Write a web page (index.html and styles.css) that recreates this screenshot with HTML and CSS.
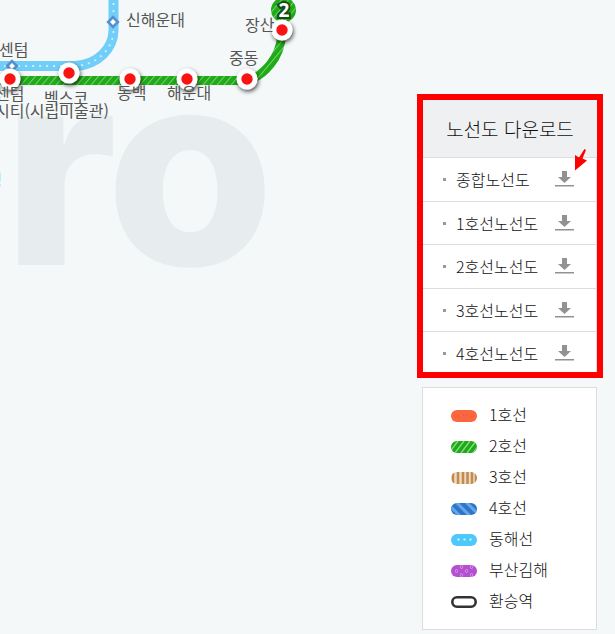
FILE: index.html
```html
<!DOCTYPE html>
<html lang="ko">
<head>
<meta charset="utf-8">
<meta name="viewport" content="width=device-width, initial-scale=1">
<title>노선도</title>
<link rel="stylesheet" href="styles.css">
</head>
<body>
<main class="page">
  <svg class="map" aria-label="노선도">
    <defs>
      <pattern id="hatch" width="7" height="9" patternUnits="userSpaceOnUse" patternTransform="translate(0 76) skewX(-40)">
        <rect width="7" height="9" fill="#1fab18"/>
        <rect width="1.2" height="9" fill="#7fd27a"/>
      </pattern>
      <filter id="shadow" x="-50%" y="-50%" width="200%" height="200%">
        <feDropShadow dx="1" dy="2" stdDeviation="2" flood-color="#000" flood-opacity="0.7"/>
      </filter>
      <g id="station">
        <circle r="10.5" fill="#fff" filter="url(#shadow)"/>
        <circle r="5.7" fill="#f91414"/>
      </g>
      <path id="diamond" d="M0-4.8 4.8 0 0 4.8-4.8 0Z" fill="#fff" stroke="#5590cc" stroke-width="2.6"/>
    </defs>
    <text class="watermark" x="3 106" y="265">ro</text>
    <path class="line donghae" d="M113.5 0V30C113.500 48 98 65 75 66H0"/>
    <path class="dots" d="M113.5 3V30C113.500 48 98 65 75 66H0"/>
    <path class="line line2" d="M0 80.5H247C265 75 280 58 282 34"/>
    <use href="#diamond" x="113" y="22"/>
    <use href="#diamond" x="12" y="66"/>
    <circle cx="283.500" cy="10" r="12.500" fill="url(#hatch)"/>
    <text class="badge" x="284" y="17">2</text>
    <use href="#station" x="10" y="79"/>
    <use href="#station" x="69" y="73"/>
    <use href="#station" x="130" y="79"/>
    <use href="#station" x="187" y="79"/>
    <use href="#station" x="247" y="79"/>
    <use href="#station" x="282" y="30"/>
    <g class="names">
      <text x="126" y="26">신해운대</text>
      <text x="245" y="31">장산</text>
      <text x="229" y="64">중동</text>
      <text x="-1" y="56">센텀</text>
      <text x="-5" y="100">센텀</text>
      <text x="44" y="104">벡스코</text>
      <text x="-5" y="117">시티(시립미술관)</text>
      <text x="117" y="99">동백</text>
      <text x="167" y="99">해운대</text>
      <text class="edge" x="2" y="186">명</text>
    </g>
  </svg>

  <aside class="side">
    <section class="download">
      <h2>노선도 다운로드</h2>
      <ul>
        <li><a href="#all">종합노선도<svg class="icon" viewBox="0 0 19 16"><path d="M7 0h5v6h4l-6.500 6L3 6h4ZM0 14h19v1.500H0Z"/></svg></a></li>
        <li><a href="#l1">1호선노선도<svg class="icon" viewBox="0 0 19 16"><path d="M7 0h5v6h4l-6.500 6L3 6h4ZM0 14h19v1.500H0Z"/></svg></a></li>
        <li><a href="#l2">2호선노선도<svg class="icon" viewBox="0 0 19 16"><path d="M7 0h5v6h4l-6.500 6L3 6h4ZM0 14h19v1.500H0Z"/></svg></a></li>
        <li><a href="#l3">3호선노선도<svg class="icon" viewBox="0 0 19 16"><path d="M7 0h5v6h4l-6.500 6L3 6h4ZM0 14h19v1.500H0Z"/></svg></a></li>
        <li><a href="#l4">4호선노선도<svg class="icon" viewBox="0 0 19 16"><path d="M7 0h5v6h4l-6.500 6L3 6h4ZM0 14h19v1.500H0Z"/></svg></a></li>
      </ul>
      <svg class="pointer" viewBox="0 0 14 22"><path d="M10.500 0 12 1 8.500 9.500 13 11.500 1 21.500 1 6 5 8.500Z"/></svg>
    </section>

    <ul class="legend">
      <li><svg class="swatch" viewBox="0 0 26 12"><rect width="26" height="12" rx="6" fill="#fa6640"/><path d="M7 6h1M12 5h1M15 5h1M19 7h1" stroke="#e84a35"/></svg>1호선</li>
      <li><svg class="swatch" viewBox="0 0 26 12"><clipPath id="pill"><rect width="26" height="12" rx="6"/></clipPath><g clip-path="url(#pill)"><path d="M0 0h26v12H0Z" fill="#1fab18"/><path d="M-2 12 7 0M4 12 13 0M10 12 19 0M16 12 25 0M22 12 31 0" stroke="#8fd98a" stroke-width="1.300"/></g></svg>2호선</li>
      <li><svg class="swatch" viewBox="0 0 26 12"><g clip-path="url(#pill)"><path d="M0 0h26v12H0Z" fill="#ecd9c8"/><path d="M2 0v12M7 0v12M12 0v12M16.500 0v12M21 0v12M25 0v12" stroke="#c28b48" stroke-width="2.500"/></g></svg>3호선</li>
      <li><svg class="swatch" viewBox="0 0 26 12"><g clip-path="url(#pill)"><path d="M0 0h26v12H0Z" fill="#2d74cb"/><path d="M-4 0 9 13M5 -1 19 13M15 -1 29 13" stroke="#66a5e8" stroke-width="3"/></g></svg>4호선</li>
      <li><svg class="swatch" viewBox="0 0 26 12"><rect width="26" height="12" rx="6" fill="#4dc8fa"/><path d="M6.500 5.500h2M12.500 5.500h2M18.500 5.500h2" stroke="#d8f4ff" stroke-width="2"/></svg>동해선</li>
      <li><svg class="swatch" viewBox="0 0 26 12"><rect width="26" height="12" rx="6" fill="#b44fd0"/><path d="m5.500 4 1.500 2-1.500 2L4 6ZM15.500 4l1.500 2-1.500 2L14 6ZM10.500 0l1.500 2-1.500 2L9 2ZM20.500 0l1.500 2-1.500 2L19 2ZM10.500 8l1.500 2-1.500 2L9 10ZM20.500 8l1.500 2-1.500 2L19 10Z" fill="none" stroke="#d99be8" stroke-width=".8"/></svg>부산김해</li>
      <li><svg class="swatch" viewBox="0 0 26 12"><rect x="1.300" y="1.300" width="23.400" height="9.400" rx="4.700" fill="#fff" stroke="#333" stroke-width="2.600"/></svg>환승역</li>
    </ul>
  </aside>
</main>
</body>
</html>
```
FILE: styles.css
```css
* {
  box-sizing: border-box;
}

body {
  margin: 0;
  background: #f4f8f9;
  color: #111;
  font-family: "Noto Sans CJK KR", sans-serif;
  font-size: 16px;
  font-weight: 300;
}

ul {
  margin: 0;
  padding: 0;
  list-style: none;
}

.page {
  position: relative;
  display: flex;
  justify-content: flex-end;
  min-height: 100vh;
  padding: 94px 12px 4px;
}

.map {
  position: absolute;
  inset: 0;
  width: 100%;
  height: 100%;
}

.watermark {
  fill: #e7ecee;
  font-family: Inter, sans-serif;
  font-size: 272px;
  font-weight: 800;
}

.line {
  fill: none;
  stroke-width: 9;
}

.donghae {
  stroke: #70cef8;
  stroke-width: 10;
}

.line2 {
  stroke: url(#hatch);
}

.dots {
  fill: none;
  stroke: #c9edfd;
  stroke-width: 2;
  stroke-dasharray: 2 5;
}

.names {
  fill: #555;
  font-size: 16px;
  font-weight: 400;
}

.edge {
  fill: #4a90cc;
  text-anchor: end;
}

.badge {
  fill: #fff;
  stroke: #174a15;
  stroke-width: 4;
  paint-order: stroke;
  font-family: "Open Sans", sans-serif;
  font-size: 19px;
  font-weight: 700;
  text-anchor: middle;
}

.side {
  position: relative;
  width: 186px;
}

.download {
  position: relative;
  border: 6px solid #f00;
  background: #fff;
}

.download h2 {
  margin: 0;
  border-bottom: 1px solid #ddd;
  background: #eff0f2;
  font-size: 19px;
  font-weight: 300;
  line-height: 57px;
  text-align: center;
}

.download ul {
  border-right: 1px solid #ddd;
}

.download li {
  height: 43px;
  border-bottom: 1px solid #ddd;
}

.download li:nth-child(odd) {
  height: 44px;
}

.download li:last-child {
  height: 40px;
  border-bottom: 0;
}

.download a {
  display: flex;
  align-items: center;
  height: 42px;
  padding: 0 22px 0 20px;
  color: inherit;
  text-decoration: none;
}

.download a::before {
  content: "";
  width: 3px;
  height: 3px;
  margin-right: 10px;
  background: #999;
}

.icon {
  width: 19px;
  height: 16px;
  margin-left: auto;
  fill: #929292;
}

.pointer {
  position: absolute;
  top: 49px;
  right: 9px;
  width: 14px;
  height: 22px;
  fill: #f00;
}

.legend {
  margin: 9px 6px 0 5px;
  padding: 10px 0 14px 28px;
  border: 1px solid #ddd;
  background: #fff;
}

.legend li {
  display: flex;
  align-items: center;
  gap: 12px;
  height: 31px;
}

.swatch {
  width: 26px;
  height: 12px;
  margin-top: 4px;
}
```
